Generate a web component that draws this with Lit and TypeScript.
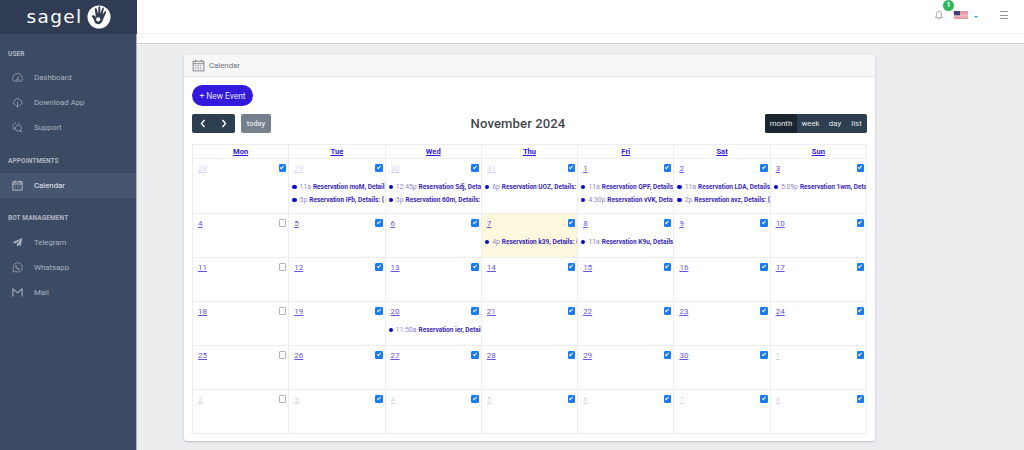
import { LitElement, html, css, svg } from "lit";
import { customElement } from "lit/decorators.js";

type Ev = { t: string; n: string };
type Cell = { d: number; dim?: boolean; off?: boolean; today?: boolean; ev?: Ev[] };

const rows: Cell[][] = [
  [
    { d: 28, dim: true },
    { d: 29, dim: true, ev: [{ t: "11a", n: "Reservation moM, Details: {" }, { t: "5p", n: "Reservation IFb, Details: {" }] },
    { d: 30, dim: true, ev: [{ t: "12:45p", n: "Reservation Sdj, Details: {" }, { t: "5p", n: "Reservation 60m, Details: {" }] },
    { d: 31, dim: true, ev: [{ t: "6p", n: "Reservation UOZ, Details: {" }] },
    { d: 1, ev: [{ t: "11a", n: "Reservation QPF, Details: {" }, { t: "4:30p", n: "Reservation vVK, Details: {" }] },
    { d: 2, ev: [{ t: "11a", n: "Reservation LDA, Details: {" }, { t: "2p", n: "Reservation avz, Details: {" }] },
    { d: 3, ev: [{ t: "5:09p", n: "Reservation 1wm, Details: {" }] },
  ],
  [
    { d: 4, off: true }, { d: 5 }, { d: 6 },
    { d: 7, today: true, ev: [{ t: "4p", n: "Reservation k39, Details: {" }] },
    { d: 8, ev: [{ t: "11a", n: "Reservation K9u, Details: {" }] },
    { d: 9 }, { d: 10 },
  ],
  [{ d: 11, off: true }, { d: 12 }, { d: 13 }, { d: 14 }, { d: 15 }, { d: 16 }, { d: 17 }],
  [
    { d: 18, off: true }, { d: 19 },
    { d: 20, ev: [{ t: "11:50a", n: "Reservation ier, Details: {" }] },
    { d: 21 }, { d: 22 }, { d: 23 }, { d: 24 },
  ],
  [{ d: 25, off: true }, { d: 26 }, { d: 27 }, { d: 28 }, { d: 29 }, { d: 30 }, { d: 1, dim: true }],
  [
    { d: 2, dim: true, off: true }, { d: 3, dim: true }, { d: 4, dim: true }, { d: 5, dim: true },
    { d: 6, dim: true }, { d: 7, dim: true }, { d: 8, dim: true },
  ],
];

const days = ["Mon", "Tue", "Wed", "Thu", "Fri", "Sat", "Sun"];

const icons: Record<string, unknown> = {
  gauge: svg`<path d="M2.5 15 H15.5 Q17 13.5 17 10.5 A8 8 0 0 0 1 10.5 Q1 13.5 2.5 15Z"/><path d="M9 12 L11.5 7"/><circle cx="9" cy="12.2" r="1"/>`,
  cloud: svg`<path d="M5.5 12.5 H4.5 A3.5 3.5 0 0 1 4.5 6 A4.8 4.8 0 0 1 13.6 5.5 A3.6 3.6 0 0 1 13.5 12.5 H12.5"/><path d="M9 8 V16.5 M6 13.5 L9 16.5 L12 13.5"/>`,
  chat: svg`<path d="M7 1.5 A5.5 5 0 0 0 2.8 9.8 L2 12 L5 11"/><path d="M10 1.8 A5.5 5 0 0 1 12.5 4"/><circle cx="10.5" cy="10" r="5"/><path d="M14 13.5 L15.5 16 L12.5 15"/>`,
  cal: svg`<rect x="1.5" y="3" width="15" height="13.5"/><path d="M1.5 6.5 H16.5 M5 1 V4.5 M13 1 V4.5"/><path d="M5 9.5 H6 M8.5 9.5 H9.5 M12 9.5 H13 M5 12.8 H6 M8.5 12.8 H9.5 M12 12.8 H13" stroke-width=".8"/>`,
  wa: svg`<path d="M1.5 16.5 L2.7 12.5 A7.6 7.6 0 1 1 5.6 15.4 Z"/><path d="M6.3 5.5 C5.2 6.5 5.5 8.2 7.2 10.2 C9 12.2 11 13 12.3 11.8 L11 10.2 L9.9 10.8 C9 10.3 8.1 9.3 7.6 8.3 L8.3 7.2 Z"/>`,
  mail: svg`<path d="M1.5 15.5 V3 L9 9.5 L16.5 3 V15.5" stroke-width="1.7"/>`,
};

@customElement("app-root")
export class AppRoot extends LitElement {
  static styles = css`
    :host { display: block; width: 1024px; height: 450px; overflow: hidden; font-family: Roboto, "Liberation Sans", sans-serif; background: #ebedef; }
    * { box-sizing: border-box; }
    .app { display: flex; height: 450px; }
    .side { width: 137px; flex: none; background: #3c4b64; border-right: 1px solid #a9b0bc; color: #b0b7c3; }
    .brand { height: 34px; margin-right: -1px; background: #303c54; display: flex; align-items: center; justify-content: center; gap: 4px; padding-left: 0; }
    .brand span { color: #fff; font-family: "DejaVu Sans", sans-serif; font-size: 18.5px; letter-spacing: 1.4px; line-height: 32px; }
    .sec { font-size: 6.5px; font-weight: 700; letter-spacing: 0.1px; color: #aeb5c0; height: 10px; line-height: 10px; padding-left: 8px; }
    .item { height: 25px; display: flex; align-items: center; padding-left: 12px; gap: 11px; font-size: 7.8px; color: #aab2bf; }
    .item.act { background: #465670; color: #e6e8ec; }
    .item svg { width: 11px; height: 11px; fill: none; stroke: currentColor; stroke-width: 1.1; flex: none; }
    .item svg.fill { fill: currentColor; stroke: none; }
    .s1 { margin-top: 15px; }
    .g1 { margin-top: 6px; }
    .s2 { margin-top: 16px; }
    .g2 { margin-top: 7px; }
    .s3 { margin-top: 15px; }
    .g3 { margin-top: 6.5px; }
    .main { flex: 1; min-width: 0; display: flex; flex-direction: column; }
    .top { height: 44px; background: #fff; border-bottom: 1px solid #d0d3d9; flex: none; }
    .topin { height: 34px; border-bottom: 1px solid #f3f3f4; display: flex; align-items: center; justify-content: flex-end; padding: 0 16px 3px 0; }
    .bell { position: relative; width: 10px; height: 10px; margin-right: 10px; color: #8a8f98; }
    .bell svg { width: 10px; height: 10px; fill: none; stroke: currentColor; stroke-width: 1; display: block; }
    .badge { position: absolute; left: 9px; top: -10px; width: 11px; height: 11px; border-radius: 50%; background: #2eb85c; color: #fff; font-size: 7px; font-weight: 700; line-height: 11px; text-align: center; }
    .flag { width: 14px; height: 8px; display: block; }
    .caret { width: 0; height: 0; border: 2px solid transparent; border-top: 2px solid #3399ff; border-bottom: 0; margin: 3px 22px 0 6px; }
    .burger { width: 8px; height: 8px; display: flex; flex-direction: column; justify-content: space-between; }
    .burger i { display: block; height: 1px; background: #9499a1; }
    .card { margin: 11px 149px 0 47px; width: 691px; height: 386px; background: #fff; border-radius: 3px; box-shadow: 0 1px 1px #c9ccd3, 0 1px 3px rgba(60,75,100,.15); overflow: hidden; }
    .chead { height: 22px; background: #f7f7f7; border-bottom: 1px solid #e8e8e8; display: flex; align-items: center; padding-left: 8px; gap: 4px; font-size: 7.8px; color: #6d7278; }
    .chead svg { width: 13px; height: 13px; fill: none; stroke: #59606b; stroke-width: 1; }
    .body { padding: 8px 8px 0 8px; }
    .new { width: 61px; height: 21px; border-radius: 11px; background: #3219dc; color: #e4e2fb; font-size: 8.4px; display: flex; align-items: center; justify-content: center; }
    .bar { margin-top: 8px; height: 19px; display: flex; align-items: center; justify-content: space-between; }
    .left { display: flex; gap: 6px; }
    .nav { display: flex; width: 43px; height: 19px; background: #2c3e50; border-radius: 2px; }
    .nav span { flex: 1; display: flex; align-items: center; justify-content: center; }
    .nav svg { width: 6px; height: 9px; fill: none; stroke: #fff; stroke-width: 1.4; }
    .tbtn { width: 30px; height: 19px; background: #76808c; color: #e3e5e7; border-radius: 2px; font-size: 7.5px; font-weight: 500; display: flex; align-items: center; justify-content: center; }
    h2 { margin: 0; font-size: 13.1px; font-weight: 500; color: #44494f; letter-spacing: 0.1px; }
    .views { display: flex; height: 19px; background: #2c3e50; border-radius: 2px; overflow: hidden; color: #e4e7ea; font-size: 7.8px; }
    .views span { display: flex; align-items: center; justify-content: center; }
    .views .on { background: #1a252f; width: 32px; }
    .v2 { width: 27px; } .v3 { width: 22px; } .v4 { width: 21px; }
    table { margin-top: 11px; width: 675px; border-collapse: collapse; table-layout: fixed; }
    th, td { border: 1px solid #eeeeee; padding: 0; vertical-align: top; }
    th { height: 14px; font-size: 7.6px; font-weight: 700; color: #3219dc; text-decoration: underline; line-height: 13px; text-align: center; }
    td { height: 44px; overflow: hidden; }
    tr.first td { height: 55px; }
    td.cur { background: #fdf7de; }
    .dh { display: flex; justify-content: space-between; align-items: flex-start; padding: 5px 2px 0 5px; height: 12px; }
    .num { font-size: 8px; line-height: 10px; color: #3f2bd8; text-decoration: underline; opacity: .8; }
    .num.dim { opacity: .22; }
    input { appearance: none; -webkit-appearance: none; position: relative; width: 7.5px; height: 7.5px; margin: 0; display: block; background: #fff; border: 1px solid #b5b5b5; border-radius: 1px; }
    input:checked { background: #1a7cf5; border-color: #1a7cf5; }
    input:checked::after { content: ""; position: absolute; left: 1.5px; top: 0; width: 2px; height: 4px; border: solid #fff; border-width: 0 1px 1px 0; transform: rotate(40deg); box-sizing: border-box; }
    .ev { display: flex; align-items: center; white-space: nowrap; overflow: hidden; height: 13.3px; font-size: 6.8px; padding-left: 3px; color: #3a28b8; }
    .evs { margin-top: 9px; }
    .dot { width: 4.3px; height: 4.3px; border-radius: 50%; background: #0000e6; margin-right: 3px; flex: none; }
    .t { color: #8d86c8; margin-right: 2px; }
    .n { font-weight: 700; font-size: 6.5px; }
  `;

  private icon(name: string, cls = "") {
    return html`<svg class=${cls} viewBox="0 0 18 18">${icons[name]}</svg>`;
  }

  private logo() {
    return html`<svg width="24" height="24" viewBox="0 0 24 25">
      <circle cx="12" cy="12.5" r="12" fill="#fff"/>
      <path fill="#303c54" d="M5 11 C7 10 8 11.5 9 12.5 C8.5 9.5 7.5 6 7.7 3.8 C8.2 2.6 9.3 3 9.6 4.2 L11.2 9.4 L11.4 2.4 C11.7 1 13 1 13.3 2.4 L13.6 9.4 L15.4 3.4 C15.9 2.2 17.2 2.6 17 4 L15.7 10.2 L18 6.8 C18.9 6 19.9 6.8 19.3 8 L16.6 14 C15.6 17.5 14 20 11 20 C8.5 20 7.6 18.5 7 16.5 C6.6 14.5 5.5 13.2 4.6 12.2 C4.3 11.7 4.5 11.3 5 11Z"/>
      <circle cx="11.2" cy="15" r="2.2" fill="#fff"/>
    </svg>`;
  }

  private flag() {
    const stripes = [];
    for (let i = 0; i < 7; i++) {
      stripes.push(svg`<rect y=${i * 1.2} width="14" height="0.6" fill="#e0727f"/>`);
    }
    return html`<svg class="flag" viewBox="0 0 14 8">
      <rect width="14" height="8" fill="#f6dfe2"/>
      ${stripes}
      <rect width="6" height="4.2" fill="#3c3f78"/>
    </svg>`;
  }

  private cell(c: Cell) {
    return html`<td class=${c.today ? "cur" : ""}>
      <div class="dh">
        <span class="num ${c.dim ? "dim" : ""}">${c.d}</span>
        <input type="checkbox" .checked=${!c.off} />
      </div>
      ${c.ev
        ? html`<div class="evs">
            ${c.ev.map(
              (e) => html`<div class="ev"><span class="dot"></span><span class="t">${e.t}</span><span class="n">${e.n}</span></div>`
            )}
          </div>`
        : ""}
    </td>`;
  }

  render() {
    return html`<div class="app">
      <aside class="side">
        <div class="brand"><span>sagel</span>${this.logo()}</div>
        <div class="sec s1">USER</div>
        <div class="g1">
          <div class="item">${this.icon("gauge")}Dashboard</div>
          <div class="item">${this.icon("cloud")}Download App</div>
          <div class="item">${this.icon("chat")}Support</div>
        </div>
        <div class="sec s2">APPOINTMENTS</div>
        <div class="g2"><div class="item act">${this.icon("cal")}Calendar</div></div>
        <div class="sec s3">BOT MANAGEMENT</div>
        <div class="g3">
          <div class="item"><svg class="fill" viewBox="0 0 18 18"><path d="M17 1.5 L1 8.5 L5.5 10.5 L14 4.5 L8 11.5 L8 16 L10.8 13 L14 15 Z"/></svg>Telegram</div>
          <div class="item">${this.icon("wa")}Whatsapp</div>
          <div class="item">${this.icon("mail")}Mail</div>
        </div>
      </aside>
      <div class="main">
        <header class="top">
          <div class="topin">
            <div class="bell">
              <svg viewBox="0 0 12 13"><path d="M1.5 10 C2.8 8.5 2.5 7 2.6 5 A3.4 3.6 0 0 1 9.4 5 C9.5 7 9.2 8.5 10.5 10 Z"/><path d="M4.8 11.2 A1.3 1.3 0 0 0 7.2 11.2"/></svg>
              <span class="badge">1</span>
            </div>
            ${this.flag()}
            <span class="caret"></span>
            <div class="burger"><i></i><i></i><i></i></div>
          </div>
        </header>
        <section class="card">
          <div class="chead"><svg viewBox="0 0 18 18"><rect x="1.5" y="3" width="15" height="13.5"/><path d="M1.5 6.5 H16.5 M5 1 V4.5 M13 1 V4.5"/><path d="M4.5 9 H13.5 M4.5 11.3 H13.5 M4.5 13.6 H13.5" stroke-dasharray="1 1.2"/></svg>Calendar</div>
          <div class="body">
            <div class="new">+ New Event</div>
            <div class="bar">
              <div class="left">
                <div class="nav">
                  <span><svg viewBox="0 0 6 9"><path d="M4.5 1 L1.5 4.5 L4.5 8"/></svg></span>
                  <span><svg viewBox="0 0 6 9"><path d="M1.5 1 L4.5 4.5 L1.5 8"/></svg></span>
                </div>
                <div class="tbtn">today</div>
              </div>
              <h2>November 2024</h2>
              <div class="views">
                <span class="on">month</span><span class="v2">week</span><span class="v3">day</span><span class="v4">list</span>
              </div>
            </div>
            <table>
              <thead><tr>${days.map((d) => html`<th>${d}</th>`)}</tr></thead>
              <tbody>
                ${rows.map(
                  (r, i) => html`<tr class=${i === 0 ? "first" : ""}>${r.map((c) => this.cell(c))}</tr>`
                )}
              </tbody>
            </table>
          </div>
        </section>
      </div>
    </div>`;
  }
}
